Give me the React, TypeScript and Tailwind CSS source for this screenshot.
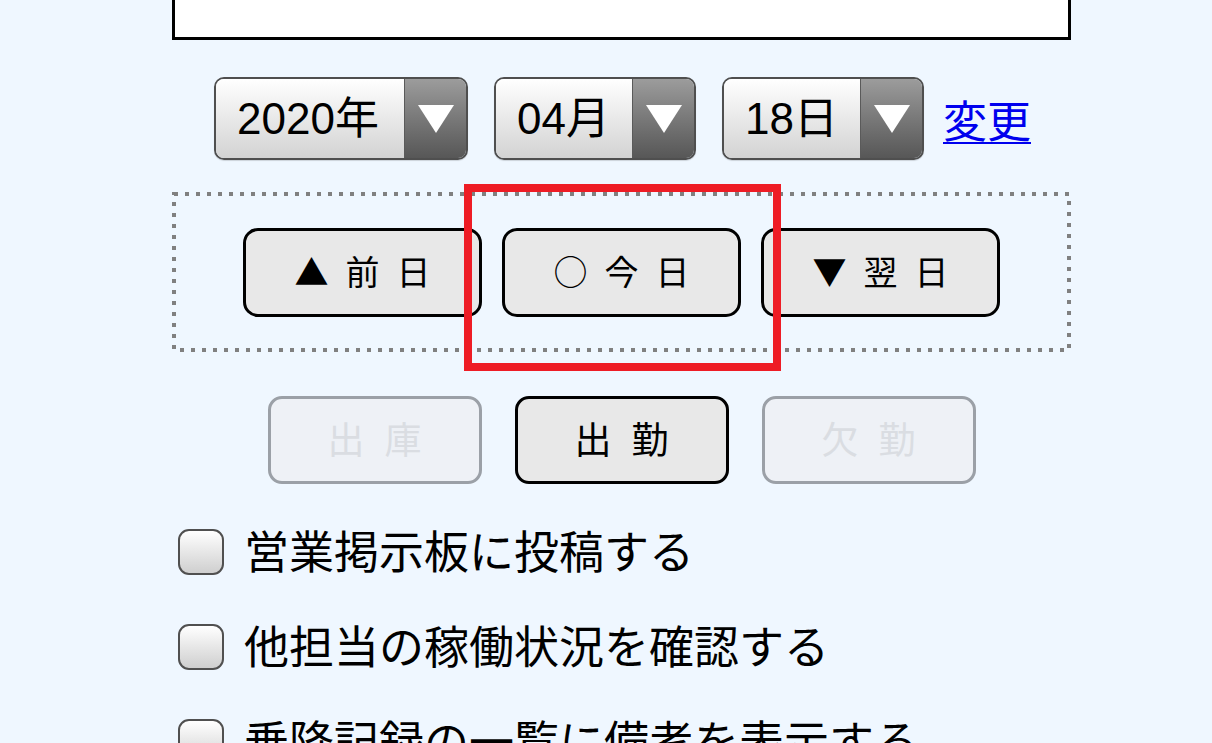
import { useState } from "react";

const font = "font-['Liberation_Sans','Noto_Sans_CJK_JP',sans-serif]";
const jp = "font-['Noto_Sans_CJK_JP',sans-serif]";

type SelectProps = { value: string; width: string };

const DateSelect = ({ value, width }: SelectProps) => {
  return (
    <div
      className={`${width} flex h-[83px] overflow-hidden rounded-[10px] border-2 border-[#4f4f4f] shadow-[0_1px_1px_rgba(0,0,0,0.15)]`}
    >
      <div className="flex flex-1 items-center bg-linear-to-b from-white to-[#d3d3d3] pl-[21px] text-[44px] leading-none text-black">
        {value}
      </div>
      <div className="flex w-[62px] items-center justify-center border-l border-[#5a5a5a] bg-linear-to-b from-[#9c9c9c] to-[#575757]">
        <svg width="38" height="30" viewBox="0 0 38 30">
          <polygon points="1,1 37,1 19,29" fill="#fff" />
        </svg>
      </div>
    </div>
  );
};

const DayButton = ({ chars }: { chars: string[] }) => {
  return (
    <button
      className={`${jp} flex h-[89px] w-[239px] items-center justify-center gap-[17px] rounded-[15px] border-[3px] border-black bg-[#e8e8e8] pb-[3px] text-[34px] leading-none text-black`}
    >
      {chars.map((c, i) => (
        <span key={i}>{c}</span>
      ))}
    </button>
  );
};

const StampButton = ({ chars, disabled }: { chars: string[]; disabled?: boolean }) => {
  return (
    <button
      className={
        disabled
          ? `${jp} flex h-[88px] w-[214px] items-center justify-center gap-[20px] rounded-[14px] border-[3px] border-[#9ba0a7] bg-[#eef1f6] pb-[3px] text-[37px] leading-none text-[#dadde2]`
          : `${jp} flex h-[88px] w-[214px] items-center justify-center gap-[20px] rounded-[14px] border-[3px] border-black bg-[#e8e8e8] pb-[3px] text-[37px] leading-none text-black`
      }
    >
      {chars.map((c, i) => (
        <span key={i}>{c}</span>
      ))}
    </button>
  );
};

const Options = [
  "営業掲示板に投稿する",
  "他担当の稼働状況を確認する",
  "乗降記録の一覧に備考を表示する",
];

export default function App() {
  const [checked, setChecked] = useState<boolean[]>([false, false, false]);

  return (
    <div className={`relative h-[743px] overflow-hidden bg-[#eff7ff] ${font}`}>
      <div className="ml-[172px] w-[899px]">
        <div className="h-[40px] border-x-[3px] border-b-[3px] border-black bg-white" />

        <div className="mt-[37px] flex items-center justify-center gap-[26px] pl-[2px]">
          <DateSelect value="2020年" width="w-[254px]" />
          <DateSelect value="04月" width="w-[202px]" />
          <DateSelect value="18日" width="w-[202px]" />
          <a
            href="#"
            className={`${jp} -ml-[7px] text-[44px] leading-none text-[#0000ee] underline decoration-2 underline-offset-[4px]`}
          >
            変更
          </a>
        </div>

        {/* dotted frame around the day buttons */}
        <div className="relative mt-[32px] flex h-[160px] items-center justify-center gap-[20px]">
          <svg
            className="pointer-events-none absolute inset-0"
            width="899"
            height="160"
            viewBox="0 0 899 160"
          >
            <rect
              x="2"
              y="2"
              width="895"
              height="156"
              fill="none"
              stroke="#808080"
              strokeWidth="4"
              strokeDasharray="4 7"
            />
          </svg>
          <DayButton chars={["▲", "前", "日"]} />
          <DayButton chars={["○", "今", "日"]} />
          <DayButton chars={["▼", "翌", "日"]} />
        </div>

        <div className="mt-[44px] flex justify-center gap-[33px]">
          <StampButton chars={["出", "庫"]} disabled />
          <StampButton chars={["出", "勤"]} />
          <StampButton chars={["欠", "勤"]} disabled />
        </div>

        <div className="mt-[45px] flex flex-col gap-[49px] pl-[6px]">
          {Options.map((label, i) => (
            <label key={label} className="flex h-[46px] items-center gap-[20px]">
              <input
                type="checkbox"
                checked={checked[i]}
                onChange={() =>
                  setChecked(checked.map((v, j) => (j === i ? !v : v)))
                }
                className="h-[46px] w-[46px] shrink-0 appearance-none rounded-[11px] border-2 border-[#505050] bg-linear-to-b from-white to-[#cfcfcf]"
              />
              <span className={`${jp} whitespace-nowrap pb-[6px] text-[45px] leading-none text-black`}>
                {label}
              </span>
            </label>
          ))}
        </div>
      </div>

      {/* highlight */}
      <div className="absolute left-[464px] top-[184px] h-[187px] w-[317px] border-[8px] border-[#ee1c25]" />
    </div>
  );
}
